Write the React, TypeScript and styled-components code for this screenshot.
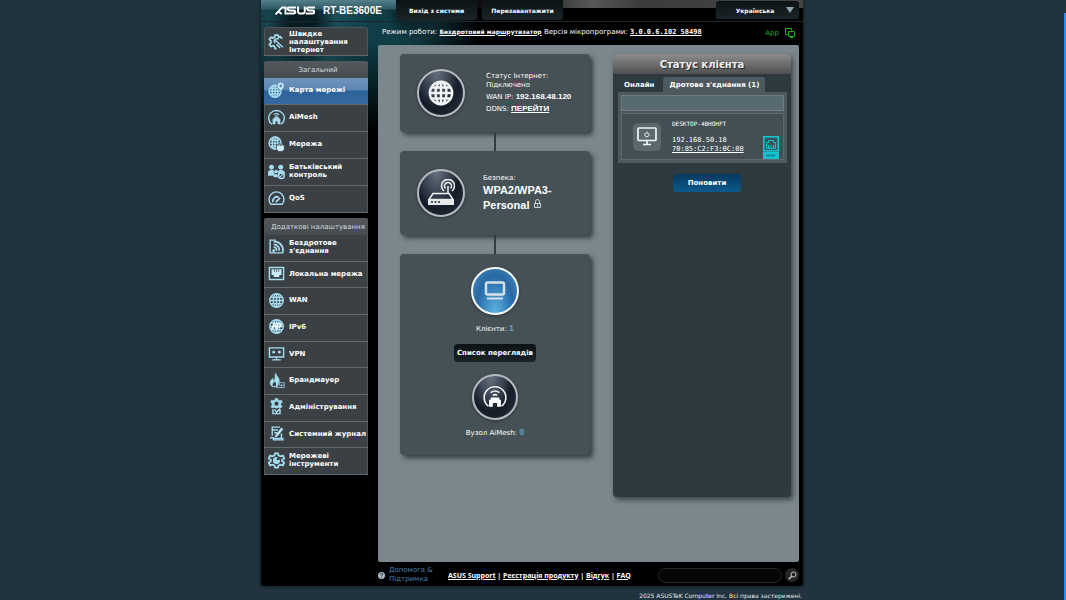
import React, { useState } from "react";
import styled, { createGlobalStyle, css } from "styled-components";

const sans = `"DejaVu Sans", Verdana, sans-serif`;
const arial = `"Liberation Sans", Arial, sans-serif`;
const mono = `"DejaVu Sans Mono", monospace`;

const GlobalStyle = createGlobalStyle`
  * { box-sizing: border-box; }
  body {
    margin: 0;
    padding-right: 2px;
    overflow: hidden;
    background: #21333e;
    font: 7px/9px ${sans};
    color: #fff;
  }
  body::after {
    content: "";
    position: fixed;
    top: 13px;
    right: 0;
    bottom: 0;
    width: 2px;
    background: #2f8cf0;
  }
  button, input, select { font: inherit; color: inherit; margin: 0; }
  a { color: inherit; }
  svg { display: block; flex: none; }
`;

const Page = styled.div`
  max-width: 542px;
  margin: 0 auto;
`;

const Shell = styled.div`
  border-radius: 0 0 3px 3px;
  box-shadow: 0 0 4px #0b1318;
  background:
    radial-gradient(ellipse 34px 46px at 42px 26px, rgba(0, 10, 14, 0.75) 40%, transparent 100%),
    radial-gradient(ellipse 26px 34px at 150px 8px, rgba(0, 10, 14, 0.5) 40%, transparent 100%),
    linear-gradient(180deg, transparent 0 40px, #000 130px),
    linear-gradient(90deg, #14404a 0, #1f5560 60px, #0f3e47 110px, #113c45 150px, #000 220px);
  background-color: #000;
`;

const Header = styled.header`
  display: grid;
  grid-template-columns: 117px 1fr auto;
  align-items: start;
  height: 22px;
  padding: 0 4px 0 14px;
  border-bottom: 1px solid #1c2628;
  background:
    linear-gradient(180deg, #54808a 0, #2c5a64 9px, transparent 10px) 0 0 / 140px 22px no-repeat,
    linear-gradient(90deg, transparent 200px, #3b3b3b 300px, #585858 330px, #3c3c3c 380px, #444 100%) 0 0 / 100% 8px no-repeat;
`;

const Brand = styled.h1`
  display: flex;
  align-items: center;
  gap: 8px;
  height: 21px;
  margin: 0;
  font: bold 10px/21px ${arial};
  white-space: nowrap;
`;

const HeaderActions = styled.div`
  display: flex;
  gap: 5px;
  padding-left: 4px;
`;

const darkButton = css`
  border: 0;
  background: linear-gradient(180deg, #0c1214, #1a2428);
  box-shadow: 0 0 1px #445;
  font-weight: bold;
  text-align: center;
  white-space: nowrap;
`;

const HeaderButton = styled.button`
  ${darkButton}
  min-width: 81px;
  height: 20px;
  padding: 0;
  border-radius: 0 0 4px 4px;
  font-size: 6px;
`;

const LanguageBox = styled.label`
  position: relative;
  display: block;
  svg { position: absolute; right: 5px; top: 7px; pointer-events: none; }
`;

const LanguageSelect = styled.select`
  ${darkButton}
  appearance: none;
  width: 83px;
  height: 18px;
  padding: 0 5px 0 0;
  margin-top: 1px;
  border-radius: 3px;
  font-size: 6px;
  text-align-last: center;
`;

const Columns = styled.div`
  display: grid;
  grid-template-columns: 104px minmax(0, 1fr);
  gap: 10px;
  padding: 0 4px 0 3px;
`;

const Sidebar = styled.nav`
  display: flex;
  flex-direction: column;
  gap: 5px;
  padding-top: 5px;
`;

const Menu = styled.section<{ $height: number }>`
  display: flex;
  flex-direction: column;
  min-height: ${(p) => p.$height}px;
  border-radius: 3px 3px 0 0;
  overflow: hidden;
  background: #3a4044;
  box-shadow: inset 0 0 0 1px #4e5558;
`;

const MenuTitle = styled.h2`
  margin: 0;
  height: 17px;
  padding-left: 4px;
  font: 7px/18px ${sans};
  text-align: center;
  white-space: nowrap;
  color: #d6dcde;
  background: linear-gradient(180deg, #53595c, #454b4e);
`;

const MenuItem = styled.a<{ $active?: boolean }>`
  display: flex;
  flex: 1;
  align-items: center;
  gap: 4px;
  padding: 0 0 2px 4px;
  border-bottom: 1px solid #63696c;
  font-weight: bold;
  line-height: 8px;
  text-decoration: none;
  white-space: pre;
  color: #fff;
  background: ${(p) =>
    p.$active ? "linear-gradient(180deg, #7096bf 0, #5c84b0 46%, #2c619a 50%, #37699f 100%)" : "none"};
`;

const SetupItem = styled(MenuItem)`
  padding-bottom: 0;
  padding-top: 1px;
`;

const InfoBar = styled.div`
  display: flex;
  align-items: center;
  justify-content: space-between;
  height: 23px;
  padding: 0 4px 4px 4px;
  white-space: nowrap;
`;

const ModeLink = styled.a`
  font: bold 6px/9px ${sans};
`;

const VersionLink = styled.a`
  font: bold 7px/9px ${mono};
`;

const AppLink = styled.a`
  display: flex;
  align-items: center;
  gap: 6px;
  padding-top: 3px;
  color: #12b312;
  text-decoration: none;
`;

const Board = styled.main`
  display: grid;
  grid-template-columns: 190px 178px;
  justify-content: space-between;
  align-items: start;
  min-height: 517px;
  padding: 9px 8px 0 22px;
  border-radius: 2px;
  background: #7b878c;
`;

const Card = styled.section<{ $height: number }>`
  display: flex;
  align-items: center;
  gap: 18px;
  min-height: ${(p) => p.$height}px;
  padding-left: 17px;
  border-radius: 4px;
  background: #465156;
  box-shadow: 3px 3px 5px #353d41;
`;

const ClientCard = styled(Card)`
  flex-direction: column;
  gap: 0;
  padding: 13px 0 0;
`;

const Connector = styled.div`
  width: 2px;
  height: 19px;
  margin: 0 auto;
  background: #323c41;
`;

const Orb = styled.div<{ $size: number; $blue?: boolean }>`
  display: grid;
  place-items: center;
  flex: none;
  width: ${(p) => p.$size}px;
  height: ${(p) => p.$size}px;
  border: 2px solid ${(p) => (p.$blue ? "#f4f8fa" : "#b4bac0")};
  border-radius: 50%;
  box-shadow: 0 1px 3px #2b3338;
  background: ${(p) =>
    p.$blue
      ? "radial-gradient(ellipse at 50% 100%, #5fb2e0 0, #2d76b2 50%, #2869a6 60%, #4d8dc0 100%)"
      : "radial-gradient(ellipse at 40% 0, #66717f 0, #3a4350 36%, #151c28 60%, #2a3340 100%)"};
`;

const Facts = styled.div`
  display: flex;
  flex-direction: column;
  gap: 2px;
  padding-left: 3px;
  p { margin: 0; }
  strong, a { font: bold 8px/9px ${arial}; }
`;

const Security = styled.div`
  p { margin: 0; }
  strong {
    display: block;
    font: bold 11px/15px ${arial};
  }
  svg { display: inline-block; vertical-align: 1px; margin-left: 1px; }
`;

const Count = styled.p<{ $space: number }>`
  margin: ${(p) => p.$space}px 0 10px;
  b { font: bold 9px/9px ${arial}; color: #5f9fd0; }
`;

const ListButton = styled.button`
  ${darkButton}
  min-width: 82px;
  height: 18px;
  margin-bottom: 12px;
  padding: 0;
  border-radius: 4px;
`;

const StatusPanel = styled.aside`
  min-height: 443px;
  border-radius: 4px;
  background: #2f3a3f;
  box-shadow: 2px 3px 5px #3d464a;
`;

const StatusTitle = styled.h2`
  height: 20px;
  margin: 0;
  border-radius: 4px 4px 0 0;
  font: bold 10px/22px ${sans};
  text-align: center;
  text-shadow: 1px 1px 1px #222;
  color: #eceeee;
  background: linear-gradient(180deg, #8e8c8c, #4e4f50);
`;

const Tabs = styled.div`
  display: flex;
  gap: 3px;
  padding: 3px 5px 0;
`;

const Tab = styled.button<{ $active: boolean }>`
  height: 15px;
  padding: 1px 6px 0;
  border: 0;
  border-radius: 3px 3px 0 0;
  font-weight: bold;
  white-space: nowrap;
  background: ${(p) => (p.$active ? "#4d595e" : "transparent")};
`;

const TabBody = styled.div`
  margin: 0 4px 0 5px;
  padding: 3px;
  background: #4d595e;
`;

const SearchInput = styled.input`
  display: block;
  width: 100%;
  height: 16px;
  padding: 0 4px;
  border: 1px solid #6f7d80;
  background: #576a71;
`;

const ClientRow = styled.div`
  display: flex;
  align-items: center;
  gap: 11px;
  height: 47px;
  margin-top: 2px;
  padding: 0 4px 0 11px;
  border: 1px solid #5d696d;
  background: #434f54;
`;

const DeviceTile = styled.div`
  display: grid;
  place-items: center;
  width: 28px;
  height: 28px;
  border-radius: 5px;
  background: #5b696e;
`;

const ClientInfo = styled.div`
  flex: 1;
  font: 7px/9px ${mono};
  white-space: nowrap;
  h3 { margin: 0 0 8px; font: 6px/9px ${mono}; }
  p { margin: 0; }
`;

const Wired = styled.div`
  align-self: flex-end;
`;

const RefreshButton = styled.button`
  display: block;
  width: 68px;
  height: 18px;
  margin: 11px auto 0 60px;
  padding: 0;
  border: 0;
  border-radius: 4px;
  font-weight: bold;
  background: linear-gradient(180deg, #06395f, #0d5a8c);
`;

const Footer = styled.footer`
  display: flex;
  align-items: center;
  height: 24px;
  padding: 2px 4px 0 117px;
`;

const HelpLink = styled.a`
  display: flex;
  align-items: center;
  gap: 4px;
  width: 70px;
  line-height: 9px;
  text-decoration: none;
  color: #4a82b0;
`;

const FooterLinks = styled.div`
  font: bold 7px/9px "Open Sans", ${arial};
  white-space: nowrap;
`;

const FooterSearch = styled.form`
  display: flex;
  align-items: center;
  gap: 3px;
  margin-left: auto;
  input {
    width: 124px;
    height: 15px;
    padding: 0 6px;
    border: 1px solid #2a2a26;
    border-radius: 8px;
    background: #060606;
  }
  button {
    display: grid;
    place-items: center;
    width: 14px;
    height: 14px;
    padding: 0;
    border: 0;
    border-radius: 50%;
    background: #262626;
  }
`;

const Copyright = styled.p`
  margin: 5px 1px 0 0;
  text-align: right;
  font-size: 6px;
  color: #e6eaec;
`;

const Icon = ({ children, size = 17 }: { children: React.ReactNode; size?: number }) => (
  <svg width={size} height={size} viewBox="0 0 24 24" fill="none" stroke="#a6dcf0" strokeWidth="2" aria-hidden="true">
    {children}
  </svg>
);

const globe = (
  <>
    <circle cx="12" cy="12" r="9.500" />
    <ellipse cx="12" cy="12" rx="4.500" ry="9" />
    <path d="M3 12h18M12 3v18M4.500 7.500h15M4.500 16.500h15" />
  </>
);

const icons: Record<string, React.ReactNode> = {
  quick: (
    <>
      <path d="M20 8l-3-3-2 1-1-3h-4l-1 3-2 1-3-1-2 3 2 2v3l-2 2 2 3 3-1 2 1 1 3h2" strokeWidth="2.500" />
      <path d="M10 10l11 10M15 9a3.500 3.500 0 0 0-5 5M12 16l5 5" />
    </>
  ),
  map: (
    <>
      <circle cx="10" cy="13" r="8.500" />
      <ellipse cx="10" cy="13" rx="4" ry="8.500" />
      <path d="M2 13h17M3 9h11M3 17h14M10 5v17" />
      <path d="M18 13c-4-4-5-6-5-8a5 5 0 0 1 10 0c0 2-1 4-5 8z" fill="#c9ecf8" stroke="#4b78a6" strokeWidth="1" />
      <circle cx="18" cy="5.500" r="2" fill="#5c84b0" stroke="none" />
    </>
  ),
  mesh: (
    <>
      <path d="M6 21.500a11 10.500 0 1 1 12 0" />
      <path d="M7 21v-7h2v-2h6v2h2v7h-3v-4h-4v4z" fill="#a6dcf0" strokeWidth="1" />
      <path d="M8 8q4-3 8 0M10 10.500q2-1.500 4 0" strokeWidth="1.500" />
    </>
  ),
  network: (
    <>
      <circle cx="10" cy="10" r="8.500" />
      <ellipse cx="10" cy="10" rx="4" ry="8.500" />
      <path d="M2 10h16M10 2v16M4 6h12M4 14h10" />
      <path d="M12 13h3v-2h2v2h2v-2h2v2h2v6l-3 3h-5l-3-3z" fill="#c9ecf8" stroke="#3a4044" strokeWidth="1" />
    </>
  ),
  family: (
    <>
      <g fill="#a6dcf0" stroke="none">
        <circle cx="5" cy="6" r="3.500" />
        <circle cx="18" cy="6" r="3.500" />
        <circle cx="11.500" cy="12" r="2.500" />
        <path d="M0 18v-4q0-4 5-4t4 4v4zM14 13q0-3 4-3 6 0 6 5h-5l-5 2zM8 20v-3q3-3 6 0v3z" />
      </g>
      <circle cx="19" cy="18" r="4" fill="#3a4044" />
      <path d="M16 21l6-6" strokeWidth="1.500" />
    </>
  ),
  qos: (
    <>
      <path d="M4 20a10.500 10.500 0 1 1 16 0z" />
      <path d="M7 17a6 6 0 0 1 8-7M11 17l6-6" strokeWidth="2.500" />
    </>
  ),
  wireless: (
    <>
      <path d="M11 3H3v18h18v-6" />
      <path d="M8 9a8 8 0 0 1 8 9M8 5a12 12 0 0 1 13 13M8 13a4 4 0 0 1 4 5" strokeWidth="2.500" />
      <circle cx="8" cy="18" r="2" fill="#a6dcf0" stroke="none" />
    </>
  ),
  lan: (
    <>
      <path d="M2 3.500h20v17H2z" />
      <path d="M5 6h14v8h-3v3H8v-3H5z" fill="#c9ecf8" stroke="none" />
      <path d="M9 6v4M12 6v4M15 6v4" stroke="#3a4044" strokeWidth="1" />
    </>
  ),
  wan: globe,
  ipv6: (
    <>
      {globe}
      <path d="M5 16l4-8 3 8M13 16V8h4q3 2 0 4h-4" stroke="#e8f8ff" strokeWidth="2.500" />
    </>
  ),
  vpn: (
    <>
      <path d="M2 4h20v13H2zM12 17v4M6 21h12" />
      <path d="M6 10h4M14 10h4M8 8v4M16 8v4" strokeWidth="2.500" />
    </>
  ),
  firewall: (
    <>
      <path d="M13 21H7c-7-4-3-10 0-12 0 3 1 3 2 3 2-4 0-7 2-10 1 4 5 6 5 11" fill="#a6dcf0" strokeWidth="1" />
      <path d="M7 20c-2-4 2-5 2-7 3 2 3 5 2 7z" fill="#3a4044" stroke="none" />
      <path d="M12 15h11v7H12zM12 18.500h11M16 15v3.500M19 18.500V22" strokeWidth="1" />
    </>
  ),
  admin: (
    <>
      <path d="M10 1h4v2l3 1 2-1 1 3-2 2v2l2 2-2 2-3-1-1 1h-4l-1-1-3 1-2-2 2-2V8L4 6l1-3 2 1 3-1z" fill="#a6dcf0" strokeWidth="1" />
      <circle cx="12" cy="8" r="3" fill="#3a4044" stroke="none" />
      <path d="M7 16v6h10v-6M9 16l3 4 5-5" />
    </>
  ),
  log: (
    <>
      <path d="M17 3H6v12M6 7h8M9 11h4M3 18h4l1 3h13v-3" />
      <path d="M21 6l-8 10-3 1 1-3 8-10z" fill="#c9ecf8" strokeWidth="1" />
      <path d="M19 12v7H7" />
    </>
  ),
  tools: (
    <>
      <path d="M10 2h4l1 3 3 1 3-1 2 4-3 2v2l3 2-2 4-3-1-3 1-1 3h-4l-1-3-3-1-3 1-2-4 3-2v-2L1 9l2-4 3 1 3-1z" strokeWidth="2.500" />
      <path d="M12 8a4 4 0 1 0 4 4l-3 1-2-2z" fill="#a6dcf0" />
    </>
  ),
};

const general: [string, string][] = [
  ["map", "Карта мережі"],
  ["mesh", "AiMesh"],
  ["network", "Мережа"],
  ["family", "Батьківський\nконтроль"],
  ["qos", "QoS"],
];

const advanced: [string, string][] = [
  ["wireless", "Бездротове\nз'єднання"],
  ["lan", "Локальна мережа"],
  ["wan", "WAN"],
  ["ipv6", "IPv6"],
  ["vpn", "VPN"],
  ["firewall", "Брандмауер"],
  ["admin", "Адміністрування"],
  ["log", "Системний журнал"],
  ["tools", "Мережеві\nінструменти"],
];

const MenuList = ({ items, active }: { items: [string, string][]; active?: string }) => (
  <>
    {items.map(([icon, label]) => (
      <MenuItem key={icon} href="#" $active={icon === active}>
        <Icon>{icons[icon]}</Icon>
        {label}
      </MenuItem>
    ))}
  </>
);

const AsusLogo = () => (
  <svg width="40" height="9" viewBox="0 0 39 8" fill="none" stroke="#fff" strokeWidth="1.900" role="img" aria-label="ASUS">
    <path d="M.5 7.800L7 1h3.200v6.800M4 5.500L6.500 7.500" />
    <path d="M20.500 1h-6.500q-1.800 0-1.800 1.400T14 4h4q1.800 0 1.800 1.500T18 7h-7" />
    <path d="M22.500 0v5q0 2 2 2h2.500q2 0 2-2V0" />
    <path d="M39 1h-6q-1.800 0-1.800 1.400T33 4h3.500q1.800 0 1.800 1.500T36.500 7h-6.500" />
  </svg>
);

const MeshOrbIcon = () => (
  <svg width="26" height="26" viewBox="0 0 24 24" fill="none" stroke="#f0f2f4" strokeWidth="1.500" aria-hidden="true">
    <path d="M6 20.500a10 10 0 1 1 12 0" />
    <path d="M6.500 21v-6.500H8v-2h8v2h1.500V21H14v-3.500h-4V21z" fill="#fff" stroke="none" />
    <path d="M8 8q4-3 8 0M10 10.500q2-1.500 4 0" />
  </svg>
);

export default function App() {
  const [tab, setTab] = useState("wired");
  return (
    <>
      <GlobalStyle />
      <Page>
        <Shell>
          <Header>
            <Brand>
              <AsusLogo />
              RT-BE3600E
            </Brand>
            <HeaderActions>
              <HeaderButton>Вихід з системи</HeaderButton>
              <HeaderButton>Перезавантажити</HeaderButton>
            </HeaderActions>
            <LanguageBox>
              <LanguageSelect aria-label="Мова" defaultValue="uk">
                <option value="uk">Українська</option>
              </LanguageSelect>
              <svg width="8" height="6" viewBox="0 0 8 6" aria-hidden="true">
                <path d="M0 0h8L4 6z" fill="#8fa6b0" />
              </svg>
            </LanguageBox>
          </Header>
          <Columns>
            <Sidebar>
              <Menu $height={29}>
                <SetupItem href="#">
                  <Icon>{icons.quick}</Icon>
                  {"Швидке\nналаштування\nІнтернет"}
                </SetupItem>
              </Menu>
              <Menu $height={152}>
                <MenuTitle>Загальний</MenuTitle>
                <MenuList items={general} active="map" />
              </Menu>
              <Menu $height={257}>
                <MenuTitle>Додаткові налаштування</MenuTitle>
                <MenuList items={advanced} />
              </Menu>
            </Sidebar>
            <div>
              <InfoBar>
                <span>
                  Режим роботи: <ModeLink href="#">Бездротовий маршрутизатор</ModeLink> Версія мікропрограми:{" "}
                  <VersionLink href="#">3.0.0.6.102_58498</VersionLink>
                </span>
                <AppLink href="#">
                  App
                  <svg width="10" height="10" viewBox="0 0 10 10" fill="none" stroke="#12b312" aria-hidden="true">
                    <path d="M2.500 6.500h-2v-6h6v2M3.500 3.500h6v5h-6zM5 9.500h3" />
                  </svg>
                </AppLink>
              </InfoBar>
              <Board>
                <div>
                  <Card $height={78}>
                    <Orb $size={48}>
                      <svg width="26" height="26" viewBox="0 0 26 26" fill="none" stroke="#f2f3f5" strokeWidth="2.400" aria-hidden="true">
                        <circle cx="13" cy="13" r="11.200" />
                        <ellipse cx="13" cy="13" rx="5.500" ry="11" />
                        <path d="M2 13h22M13 2v22M4 7.500h18M4 18.500h18" />
                      </svg>
                    </Orb>
                    <Facts>
                      <p>
                        Статус Інтернет:
                        <br />
                        Підключено
                      </p>
                      <p>
                        WAN IP: <strong>192.168.48.120</strong>
                      </p>
                      <p>
                        DDNS: <a href="#">ПЕРЕЙТИ</a>
                      </p>
                    </Facts>
                  </Card>
                  <Connector />
                  <Card $height={84}>
                    <Orb $size={48}>
                      <svg width="28" height="28" viewBox="0 0 28 28" fill="none" stroke="#f2f3f5" strokeWidth="1.500" aria-hidden="true">
                        <path d="M6 14.500h16l4 6H2z" />
                        <path d="M1 20h26v6H1z" fill="#e6e8ea" stroke="none" />
                        <path d="M4 23h2M7.500 23h2M11 23h2" stroke="#20283a" />
                        <path d="M21 15V7M17 12a6.500 6.500 0 1 1 8 0M18.500 9.500a3.500 3.500 0 1 1 5 0" />
                      </svg>
                    </Orb>
                    <Security>
                      <p>Безпека:</p>
                      <strong>
                        WPA2/WPA3-
                        <br />
                        Personal{" "}
                        <svg width="7" height="9" viewBox="0 0 7 9" fill="none" stroke="#d0d4d6" aria-hidden="true">
                          <path d="M1.500 4V2.500q0-2 2-2t2 2V4M.5 4.500h6v4h-6zM3.500 5.500v2" />
                        </svg>
                      </strong>
                    </Security>
                  </Card>
                  <Connector />
                  <ClientCard $height={201}>
                    <Orb $size={48} $blue>
                      <svg width="22" height="20" viewBox="0 0 22 20" fill="none" stroke="#d8dfe8" strokeWidth="2.500" aria-hidden="true">
                        <rect x="2" y="1.500" width="18" height="12" rx="1.500" />
                        <path d="M3 17.500h16" strokeWidth="2" />
                      </svg>
                    </Orb>
                    <Count $space={9}>
                      Клієнти: <b>1</b>
                    </Count>
                    <ListButton>Список переглядів</ListButton>
                    <Orb $size={46}>
                      <MeshOrbIcon />
                    </Orb>
                    <Count $space={8}>
                      Вузол AiMesh: <b>0</b>
                    </Count>
                  </ClientCard>
                </div>
                <StatusPanel>
                  <StatusTitle>Статус клієнта</StatusTitle>
                  <Tabs role="tablist">
                    <Tab role="tab" $active={tab === "online"} onClick={() => setTab("online")}>
                      Онлайн
                    </Tab>
                    <Tab role="tab" $active={tab === "wired"} onClick={() => setTab("wired")}>
                      Дротове з'єднання (1)
                    </Tab>
                  </Tabs>
                  <TabBody>
                    <SearchInput aria-label="Пошук клієнта" />
                    <ClientRow>
                      <DeviceTile>
                        <svg width="20" height="19" viewBox="0 0 20 19" fill="none" stroke="#f0f4f5" strokeWidth="1.700" aria-hidden="true">
                          <rect x="1" y="1" width="18" height="12.500" rx="1" />
                          <path d="M10 13.500v4M6 17.500h8" />
                          <path d="M8.500 6a2.200 2.200 0 1 0 3 0M10 4.500v2.500" strokeWidth="1" />
                        </svg>
                      </DeviceTile>
                      <ClientInfo>
                        <h3>DESKTOP-4BHOHFT</h3>
                        <p>192.168.50.18</p>
                        <a href="#">70:85:C2:F3:0C:08</a>
                      </ClientInfo>
                      <Wired>
                        <svg width="16" height="23" viewBox="0 0 16 23" fill="none" stroke="#12c4d0" aria-hidden="true">
                          <rect x=".8" y=".8" width="14.400" height="14" strokeWidth="1.600" />
                          <path d="M3.500 12.500v-6h2v-2h5v2h2v6zM5.500 9v3M8 9v3M10.500 9v3" />
                          <path d="M0 16h16v7H0z" fill="#12c4d0" stroke="none" />
                          <path d="M3 19.500h9" stroke="#0b8a96" strokeWidth="2" />
                        </svg>
                      </Wired>
                    </ClientRow>
                  </TabBody>
                  <RefreshButton>Поновити</RefreshButton>
                </StatusPanel>
              </Board>
            </div>
          </Columns>
          <Footer>
            <HelpLink href="#">
              <svg width="7" height="7" viewBox="0 0 7 7" aria-hidden="true">
                <circle cx="3.500" cy="3.500" r="3.500" fill="#a9bcc8" />
                <path d="M2.300 2.600q0-1.200 1.200-1.200t1.200 1-1.200 1.300v.6M3.500 5v.8" fill="none" stroke="#0b1a24" strokeWidth=".8" />
              </svg>
              <span>
                Допомога &amp;
                <br />
                Підтримка
              </span>
            </HelpLink>
            <FooterLinks>
              <a href="#">ASUS Support</a> | <a href="#">Реєстрація продукту</a> | <a href="#">Відгук</a> | <a href="#">FAQ</a>
            </FooterLinks>
            <FooterSearch>
              <input type="text" aria-label="Пошук" />
              <button type="button" aria-label="Шукати">
                <svg width="9" height="9" viewBox="0 0 9 9" fill="none" stroke="#c8c8c8" aria-hidden="true">
                  <circle cx="5.500" cy="3.500" r="2.500" />
                  <path d="M3.700 5.300L.8 8.200" strokeWidth="1.500" />
                </svg>
              </button>
            </FooterSearch>
          </Footer>
        </Shell>
        <Copyright>2025 ASUSTeK Computer Inc. Всі права застережені.</Copyright>
      </Page>
    </>
  );
}
